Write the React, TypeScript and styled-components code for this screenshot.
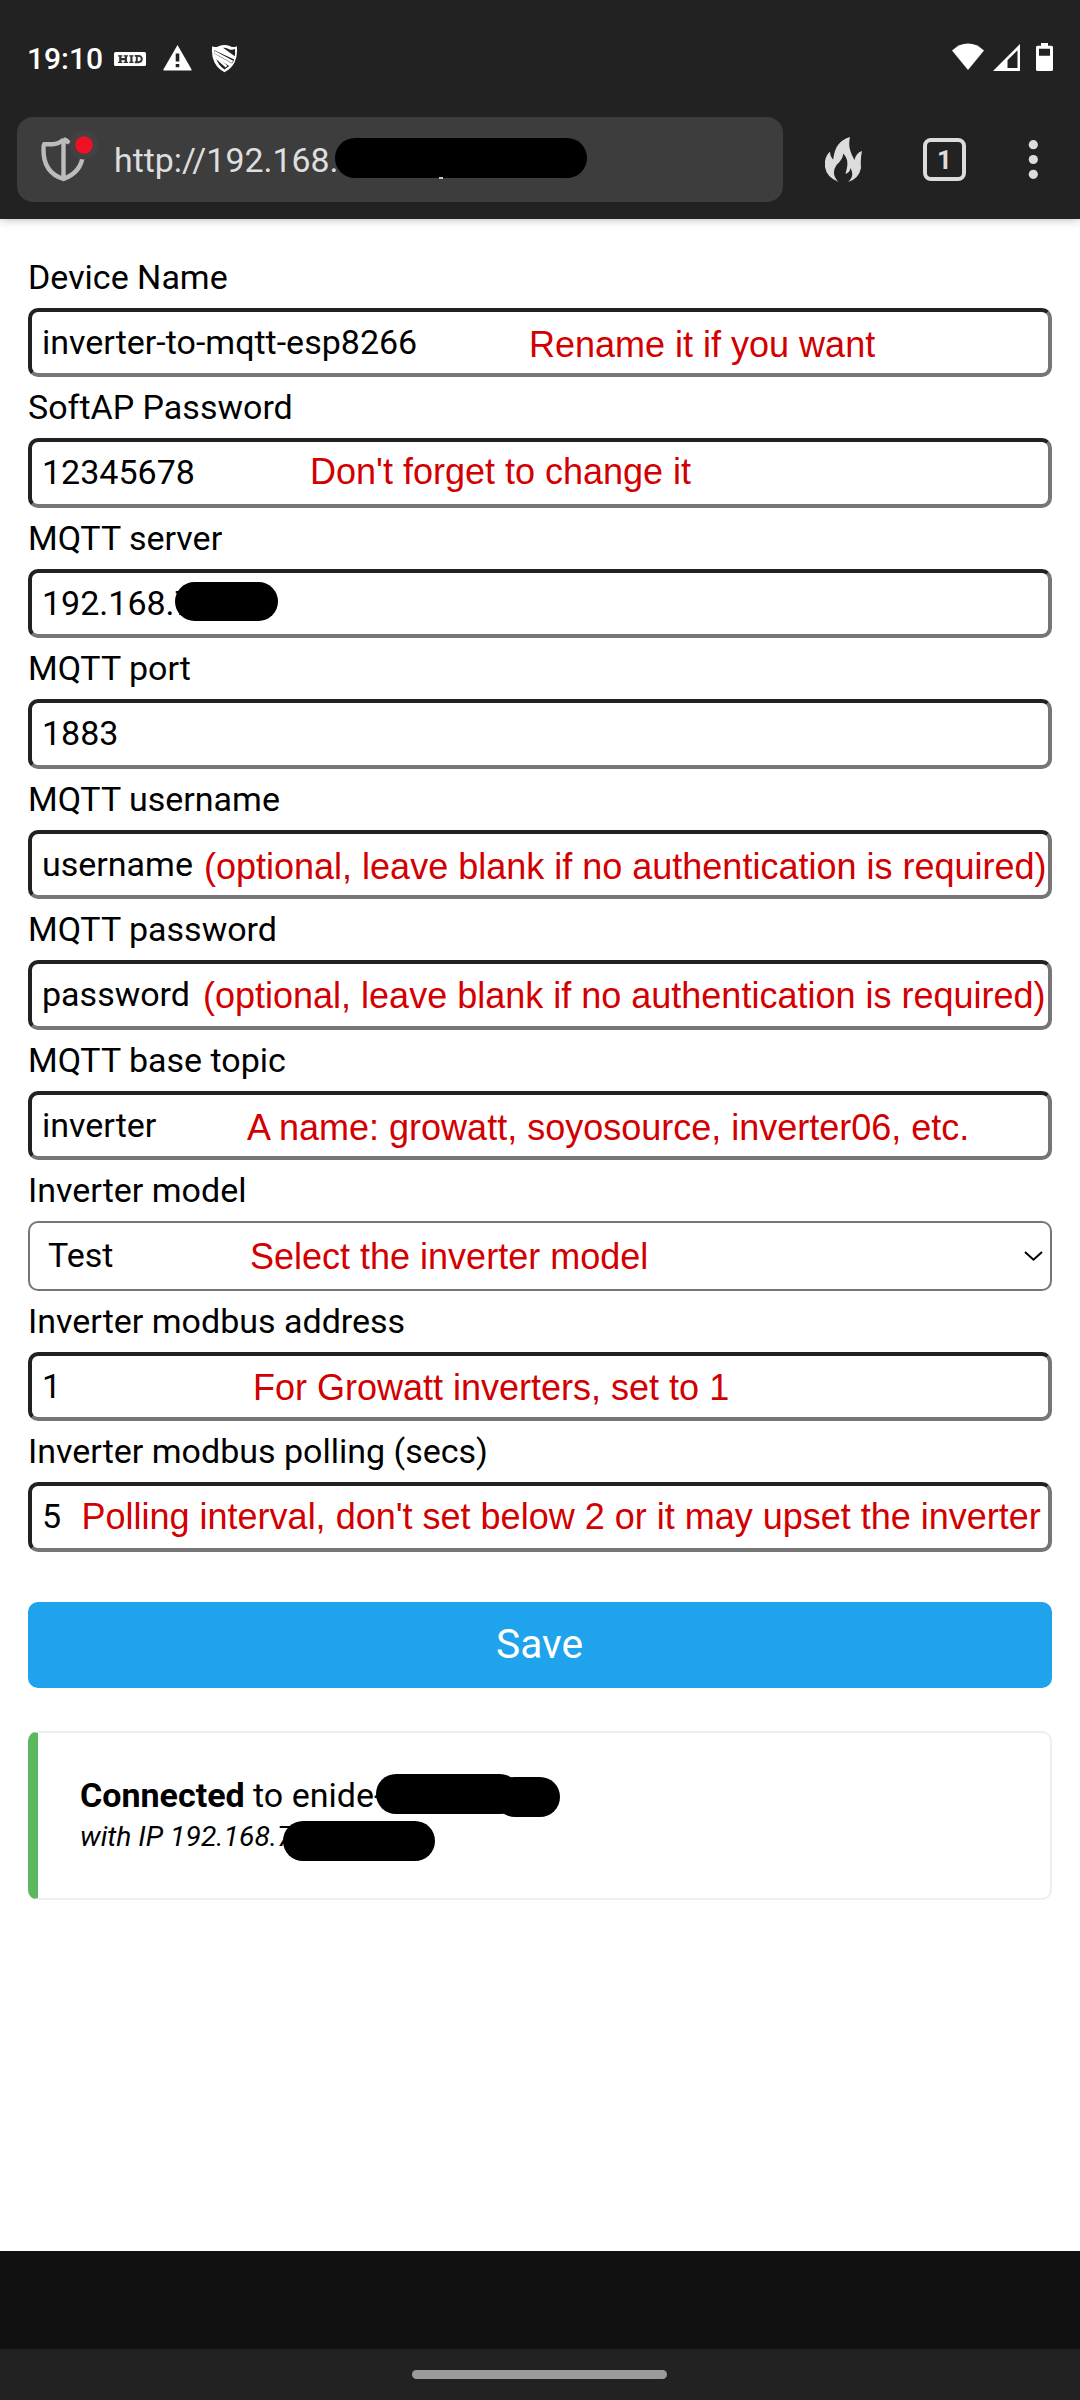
import React from "react";
import styled, { createGlobalStyle } from "styled-components";

const GlobalStyle = createGlobalStyle`
  * { box-sizing: border-box; }
  body { margin: 0; background: #fff; }
`;

const Screen = styled.div`
  width: 1080px;
  height: 2400px;
  display: flex;
  flex-direction: column;
  background: #fff;
  color: #000;
  font-family: Roboto, sans-serif;
  font-size: 34px;
  overflow: hidden;
`;

const Chrome = styled.header`
  height: 219px;
  flex: none;
  background: #222;
  box-shadow: 0 1px 9px rgba(0, 0, 0, 0.26);
`;

const StatusBar = styled.div`
  height: 117px;
  display: flex;
  align-items: flex-start;
  justify-content: space-between;
  padding: 43px 27px 0 27px;
`;

const StatusGroup = styled.div`
  display: flex;
  align-items: flex-start;
`;

const Clock = styled.span`
  width: 87px;
  font-size: 30px;
  font-weight: 500;
  line-height: 32px;
  color: #fff;
`;

const Glyph = styled.svg<{ $gap?: number; $drop?: number }>`
  display: block;
  flex: none;
  margin-left: ${(p) => p.$gap ?? 0}px;
  margin-top: ${(p) => p.$drop ?? 0}px;
`;

const Toolbar = styled.div`
  display: flex;
  align-items: flex-start;
  padding-left: 17px;
`;

const AddressBar = styled.div`
  width: 766px;
  height: 85px;
  display: flex;
  border-radius: 16px;
  background: #3d3d3d;
  position: relative;
`;

const Url = styled.span`
  margin-left: 16px;
  line-height: 88px;
  font-size: 33.9px;
  color: #dedede;
`;

const Redaction = styled.span<{ $x: number; $y: number; $w: number; $h?: number }>`
  position: absolute;
  left: ${(p) => p.$x}px;
  top: ${(p) => p.$y}px;
  width: ${(p) => p.$w}px;
  height: ${(p) => p.$h ?? 40}px;
  border-radius: 20px;
  background: #000;
`;

const UrlSpeck = styled.span`
  position: absolute;
  left: 422px;
  top: 60px;
  width: 4px;
  height: 2px;
  background: #c8c8c8;
`;

const TabCount = styled.div`
  width: 43px;
  height: 43px;
  margin: 21px 0 0 61px;
  border: 4px solid #dcdcdc;
  border-radius: 8px;
  color: #dcdcdc;
  font-size: 26px;
  font-weight: 700;
  line-height: 36px;
  text-align: center;
`;

const Page = styled.main`
  flex: 1;
  padding: 27.98px 28px 0;
`;

const Row = styled.div`
  position: relative;
  height: 130.47px;
`;

const Label = styled.div`
  height: 61.02px;
  line-height: 61px;
  white-space: nowrap;
`;

const Field = styled.div`
  height: 69.45px;
  padding-left: 10px;
  border: 4px solid;
  border-color: #212121 #767676 #767676 #212121;
  border-radius: 10px;
  line-height: 61px;
  white-space: nowrap;
`;

const Select = styled.div`
  height: 69.45px;
  display: flex;
  align-items: center;
  justify-content: space-between;
  padding: 0 7px 0 18px;
  border: 2px solid #767676;
  border-radius: 10px;
  line-height: 65px;
`;

const Note = styled.span<{ $x: number; $y: number }>`
  position: absolute;
  left: ${(p) => p.$x}px;
  top: ${(p) => p.$y}px;
  color: #d20000;
  font-family: "Liberation Sans", Arial, sans-serif;
  font-size: 36px;
  line-height: 41px;
  white-space: nowrap;
`;

const SaveButton = styled.button`
  display: block;
  width: 100%;
  height: 86px;
  margin: 50.3px 0 43px;
  padding: 0 1px 2px 0;
  border: 0;
  border-radius: 10px;
  background: #1fa3ec;
  color: #fff;
  font-family: Roboto, sans-serif;
  font-size: 40.7px;
  line-height: 82px;
`;

const StatusCard = styled.section`
  position: relative;
  height: 169px;
  padding: 41px 0 0 42px;
  border: 2px solid #eee;
  border-left: 10px solid #5cb85c;
  border-radius: 10px;
`;

const StatusLine = styled.div`
  line-height: 42px;
`;

const AddressLine = styled.em`
  display: block;
  font-size: 28.3px;
  line-height: 41px;
`;

const BottomBar = styled.div`
  height: 98px;
  flex: none;
  background: #111;
`;

const GestureBar = styled.div`
  height: 51px;
  flex: none;
  padding-top: 21px;
  background: #222;
`;

const GestureHandle = styled.div`
  width: 255px;
  height: 9px;
  margin-left: 412px;
  border-radius: 5px;
  background: #9b9b9b;
`;

type Item = {
  label: string;
  value: string;
  select?: boolean;
  note?: [text: string, x: number, y: number];
  redact?: boolean;
};

const optional = "(optional, leave blank if no authentication is required)";

const items: Item[] = [
  { label: "Device Name", value: "inverter-to-mqtt-esp8266", note: ["Rename it if you want", 501, 77] },
  { label: "SoftAP Password", value: "12345678", note: ["Don't forget to change it", 282, 74] },
  { label: "MQTT server", value: "192.168.7", redact: true },
  { label: "MQTT port", value: "1883" },
  { label: "MQTT username", value: "username", note: [optional, 176, 77] },
  { label: "MQTT password", value: "password", note: [optional, 175, 75.5] },
  { label: "MQTT base topic", value: "inverter", note: ["A name: growatt, soyosource, inverter06, etc.", 219, 77] },
  { label: "Inverter model", value: "Test", select: true, note: ["Select the inverter model", 222, 76] },
  { label: "Inverter modbus address", value: "1", note: ["For Growatt inverters, set to 1", 225, 76.5] },
  {
    label: "Inverter modbus polling (secs)",
    value: "5",
    note: ["Polling interval, don't set below 2 or it may upset the inverter", 53.5, 75],
  },
];

function StatusIcons() {
  return (
    <StatusBar>
      <StatusGroup>
        <Clock>19:10</Clock>
        <Glyph width="32" height="14" viewBox="0 0 32 14" $drop={9}>
          <rect width="32" height="14" rx="1.5" fill="#fff" />
          <path
            d="M4 3.8h4.4M4 10.4h4.4M9.6 3.8h4.4M9.6 10.4h4.4M15.2 3.8h4.4M15.2 10.4h4.4"
            stroke="#333"
            strokeWidth="1.2"
          />
          <path d="M6.3 3.8v6.6M11.9 3.8v6.6M6.3 7.1h5.6M17.4 3.8v6.6" stroke="#333" strokeWidth="2.2" />
          <path d="M20.8 3.9h3.6q3.4.2 3.4 3.2t-3.4 3.2h-3.6M22.8 4v6" stroke="#333" strokeWidth="1.9" fill="none" />
        </Glyph>
        <Glyph width="29" height="26" viewBox="0 0 29 26" $gap={17} $drop={2}>
          <path d="M14.5 0 28.6 24.5Q29 25.6 28 25.6H1Q0 25.6.4 24.5Z" fill="#fff" />
          <path d="M14.5 8.5v8M14.5 19v3.2" stroke="#222" strokeWidth="3.6" />
        </Glyph>
        <Glyph width="27" height="29" viewBox="0 0 27 29" $gap={19} $drop={1}>
          <path
            d="M1.2 2.2Q5.5 4 8.2 2.1 13.5-.2 18.8 2.1 21.5 4 25.8 2.2 27 11 23.5 18.5 20 25 13.5 28.2 7 25 3.5 18.5 0 11 1.2 2.2Z"
            fill="#fff"
          />
          <path
            d="M3.4 6.2 23.2 15.6Q22.3 17.8 21 19.5L3.2 9.5ZM4.6 13.6 18.2 22 13.5 25.4Q7.7 22.3 4.6 13.6ZM12 3.8Q15.5 3.3 18 5.2 21 6.3 24 5.1 24.3 9 23.8 12.3Z"
            fill="#222"
          />
          <path d="M3.4 8 21.5 17.8M5 13.2l10.5 9.4" stroke="#fff" strokeWidth="2.5" />
        </Glyph>
      </StatusGroup>
      <StatusGroup>
        <Glyph width="32" height="27" viewBox="0 0 32 27">
          <path d="M0 7.6Q7 .5 16 .5T32 7.6L16 27Z" fill="#fff" />
        </Glyph>
        <Glyph width="27" height="27" viewBox="0 0 27 27" $gap={9} $drop={1}>
          <path d="M27 0V27H0ZM24.5 6.2 14.5 16.2V24H24.5Z" fill="#fff" fillRule="evenodd" />
        </Glyph>
        <Glyph width="17" height="28" viewBox="0 0 17 28" $gap={16}>
          <path
            d="M5 0H12V2.8H15.5Q17 2.8 17 4.3V26.5Q17 28 15.5 28H1.5Q0 28 0 26.5V4.3Q0 2.8 1.5 2.8H5ZM3 5.8V12.8H14V5.8Z"
            fill="#fff"
            fillRule="evenodd"
          />
        </Glyph>
      </StatusGroup>
    </StatusBar>
  );
}

function BrowserBar() {
  return (
    <Toolbar>
      <AddressBar>
        <Glyph width="60" height="60" viewBox="0 0 60 60" $gap={21} $drop={10}>
          <path
            d="M25.5 12.5Q20.5 17.5 13.5 17.2L6.3 17.2Q5.3 18.5 5.5 22 5 45.5 25.5 52 43.5 45 44.8 28M25.5 11.5V52M25.5 12.5Q29 13 31 16.5"
            fill="none"
            stroke="#bcbcbc"
            strokeWidth="4.4"
          />
          <circle cx="46" cy="18" r="14.5" fill="#424242" />
          <circle cx="46" cy="18" r="8.8" fill="#f01024" />
        </Glyph>
        <Url>http://192.168.</Url>
        <Redaction $x={318} $y={21} $w={252} />
        <UrlSpeck />
      </AddressBar>
      <Glyph width="37" height="45" viewBox="0 0 37 45" $gap={42} $drop={20}>
        <path
          d="M25 0Q10 4 8.2 22.5 5.2 20 5 14.5-.5 20-.2 27.5 0 39.5 13.5 45 5.5 37 11.5 28 18.5 21.5 18 16.5 24 22 21.8 31.5L20.5 37Q25 35.5 25.5 31 30 39 23.2 45 34 41.5 36 31 35.2 21.5 37 14 31 16 29.5 23 24.5 14 24.3 8.5 24 4 25 0Z"
          fill="#dcdcdc"
        />
      </Glyph>
      <TabCount>1</TabCount>
      <Glyph width="10" height="40" viewBox="0 0 10 40" $gap={62} $drop={22}>
        <circle cx="5.3" cy="5.7" r="4.6" fill="#dcdcdc" />
        <circle cx="5.3" cy="20.5" r="4.6" fill="#dcdcdc" />
        <circle cx="5.3" cy="35.3" r="4.6" fill="#dcdcdc" />
      </Glyph>
    </Toolbar>
  );
}

function FormRow({ label, value, select, note, redact }: Item) {
  return (
    <Row>
      <Label>{label}</Label>
      {select ? (
        <Select>
          {value}
          <svg width="20" height="12" viewBox="0 0 20 12">
            <path d="M2 2 10.5 9.7 19 2" fill="none" stroke="#000" strokeWidth="2" />
          </svg>
        </Select>
      ) : (
        <Field>{value}</Field>
      )}
      {redact && <Redaction $x={147} $y={74} $w={103} $h={39} />}
      {note && (
        <Note $x={note[1]} $y={note[2]}>
          {note[0]}
        </Note>
      )}
    </Row>
  );
}

export default function App() {
  return (
    <Screen>
      <GlobalStyle />
      <Chrome>
        <StatusIcons />
        <BrowserBar />
      </Chrome>
      <Page>
        {items.map((item) => (
          <FormRow key={item.label} {...item} />
        ))}
        <SaveButton>Save</SaveButton>
        <StatusCard>
          <StatusLine>
            <b>Connected</b> to enide-
          </StatusLine>
          <AddressLine>with IP 192.168.7</AddressLine>
          <Redaction $x={338} $y={41} $w={144} />
          <Redaction $x={457} $y={44} $w={65} />
          <Redaction $x={245} $y={88} $w={152} />
        </StatusCard>
      </Page>
      <BottomBar />
      <GestureBar>
        <GestureHandle />
      </GestureBar>
    </Screen>
  );
}
